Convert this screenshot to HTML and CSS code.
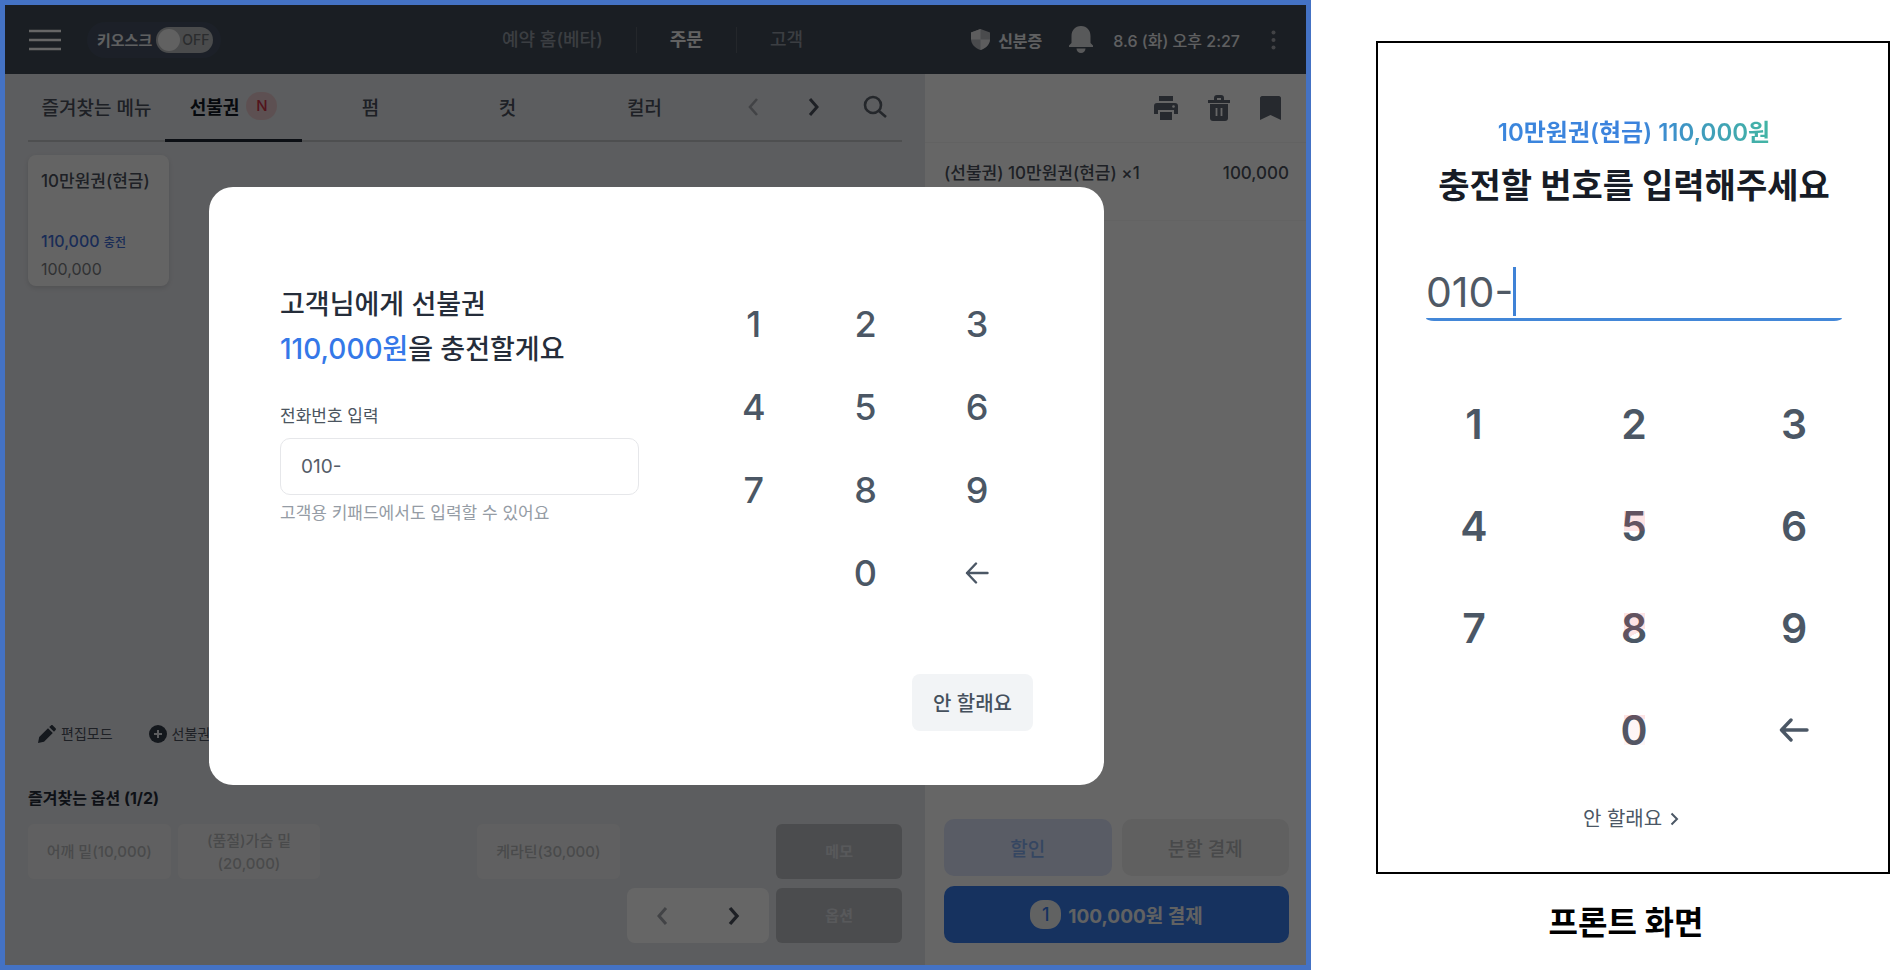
FILE: index.html
```html
<!DOCTYPE html>
<html lang="ko">
<head>
    <meta charset="UTF-8">
    <meta name="viewport" content="width=device-width, initial-scale=1.0">
    <title>선불권 충전</title>
    <link rel="stylesheet" href="styles.css">
</head>
<body>
    <div class="container">
        <!-- POS screen -->
        <div class="pos">
            <header class="header">
                <div class="header-left">
                    <button class="icon-button" aria-label="메뉴">
                        <svg width="32" height="22" viewBox="0 0 32 22" stroke="#fff" stroke-width="2.6"><path d="M0 2h32M0 11h32M0 20h32"/></svg>
                    </button>
                    <label class="kiosk">키오스크
                        <span class="switch"><input type="checkbox">OFF</span>
                    </label>
                </div>
                <nav class="nav">
                    <a href="#">예약 홈(베타)</a>
                    <a href="#" class="active">주문</a>
                    <a href="#">고객</a>
                </nav>
                <div class="header-right">
                    <a href="#" class="id-check">
                        <svg width="19" height="21" viewBox="0 0 19 21"><path d="M9.500 0 19 3.500V10c0 5-4 9-9.500 11C4 19 0 15 0 10V3.500z" fill="#b9bcc1"/><path d="M9.500 0v10.500H0V3.500zM19 10.500c-.4 5-4 8.700-9.500 10.500V10.500z" fill="#e8e9eb"/></svg>
                        신분증
                    </a>
                    <svg class="bell" width="24" height="27" viewBox="0 0 24 27" fill="#dcdee1"><path d="M12 0c-6 0-9.500 4.500-9.500 10v7L0 19.500V21h24v-1.500L21.500 17v-7C21.500 4.500 18 0 12 0zM7.500 22.500h9c0 2.500-2 4.500-4.500 4.500s-4.500-2-4.500-4.500z"/></svg>
                    <time>8.6 (화) 오후 2:27</time>
                    <button class="icon-button more" aria-label="더보기">
                        <svg width="5" height="20" viewBox="0 0 5 20" fill="#a5a9ae"><circle cx="2.500" cy="2.500" r="2"/><circle cx="2.500" cy="10" r="2"/><circle cx="2.500" cy="17.500" r="2"/></svg>
                    </button>
                </div>
            </header>

            <div class="pos-body">
                <!-- Menu side -->
                <main class="menu">
                    <div class="tabs">
                        <button class="tab">즐겨찾는 메뉴</button>
                        <button class="tab active">선불권 <span class="new">N</span></button>
                        <button class="tab">펌</button>
                        <button class="tab">컷</button>
                        <button class="tab">컬러</button>
                        <div class="tab-tools">
                            <button class="icon-button" aria-label="이전">
                                <svg width="12" height="20" viewBox="0 0 12 20" fill="none" stroke="#a5a9ae" stroke-width="2.600"><path d="M10 2 3 10l7 8"/></svg>
                            </button>
                            <button class="icon-button" aria-label="다음">
                                <svg width="12" height="20" viewBox="0 0 12 20" fill="none" stroke="#4b525e" stroke-width="3"><path d="m2 2 7 8-7 8"/></svg>
                            </button>
                            <button class="icon-button" aria-label="검색">
                                <svg width="24" height="24" viewBox="0 0 24 24" fill="none" stroke="#5b616b" stroke-width="2.600"><circle cx="10" cy="10" r="8"/><path d="m16 16 7 6"/></svg>
                            </button>
                        </div>
                    </div>

                    <button class="ticket">
                        <span class="ticket-name">10만원권(현금)</span>
                        <span class="ticket-charge">110,000 <small>충전</small></span>
                        <span class="ticket-price">100,000</span>
                    </button>

                    <div class="edit-tools">
                        <button class="edit-tool">
                            <svg width="18" height="18" viewBox="0 0 18 18" fill="#343c49"><path d="M0 18l1.200-6L10 3.200l4.800 4.800L6 16.800zM11.200 2 13 .4c.6-.5 1.300-.5 1.800 0l2.800 2.800c.5.500.5 1.200 0 1.800L16 6.800z"/></svg>
                            편집모드
                        </button>
                        <button class="edit-tool">
                            <svg width="18" height="18" viewBox="0 0 18 18"><circle cx="9" cy="9" r="9" fill="#343c49"/><path d="M9 5v8M5 9h8" stroke="#e6e8ed" stroke-width="2"/></svg>
                            선불권 추가
                        </button>
                    </div>

                    <h2 class="option-title">즐겨찾는 옵션 (1/2)</h2>
                    <div class="options">
                        <button class="option">어깨 밑(10,000)</button>
                        <button class="option">(품절)가슴 밑<br>(20,000)</button>
                        <button class="option blank" disabled></button>
                        <button class="option">케라틴(30,000)</button>
                        <button class="option dark memo">메모</button>
                        <div class="pager">
                            <button class="icon-button" aria-label="이전 옵션">
                                <svg width="12" height="20" viewBox="0 0 12 20" fill="none" stroke="#a5a9ae" stroke-width="3"><path d="M10 2 3 10l7 8"/></svg>
                            </button>
                            <button class="icon-button" aria-label="다음 옵션">
                                <svg width="12" height="20" viewBox="0 0 12 20" fill="none" stroke="#4b525e" stroke-width="3.400"><path d="m2 2 7 8-7 8"/></svg>
                            </button>
                        </div>
                        <button class="option dark">옵션</button>
                    </div>
                </main>

                <!-- Order side -->
                <aside class="order">
                    <div class="order-tools">
                        <button class="icon-button" aria-label="인쇄">
                            <svg width="24" height="24" viewBox="0 0 24 24" fill="#5f6774"><path d="M5 0h14v5H5z"/><path d="M3 7h18c2 0 3 1 3 3v8h-4v-4H4v4H0v-8c0-2 1-3 3-3z"/><path d="M6 16h12v8H6z"/><circle cx="19.500" cy="10.500" r="1.300" fill="#fff"/></svg>
                        </button>
                        <button class="icon-button" aria-label="삭제">
                            <svg width="24" height="26" viewBox="0 0 24 26" fill="#5f6774"><path d="M1 5h6V3c0-2 1-3 3-3h4c2 0 3 1 3 3v2h6v3H1zm9 0h4V3h-4z"/><path d="M3 9h18v14c0 2-1 3-3 3H6c-2 0-3-1-3-3z"/><path d="M9.500 13v8M14.500 13v8" stroke="#fff" stroke-width="1.800"/></svg>
                        </button>
                        <button class="icon-button" aria-label="저장">
                            <svg width="21" height="24" viewBox="0 0 21 24" fill="#5f6774"><path d="M2 0h17c1 0 2 1 2 2v22l-10.500-5L0 24V2c0-1 1-2 2-2z"/></svg>
                        </button>
                    </div>
                    <div class="order-item">
                        <span>(선불권) 10만원권(현금) ×1</span>
                        <span>100,000</span>
                    </div>
                    <div class="order-actions">
                        <button class="action discount">할인</button>
                        <button class="action split">분할 결제</button>
                        <button class="action pay"><span class="count">1</span>100,000원 결제</button>
                    </div>
                </aside>
            </div>

            <!-- Charge dialog -->
            <div class="overlay">
                <div class="modal" role="dialog" aria-modal="true">
                    <div class="modal-body">
                        <form class="modal-form">
                            <h1 class="modal-title">고객님에게 선불권<br><em>110,000원</em>을 충전할게요</h1>
                            <label class="modal-label" for="pos-phone">전화번호 입력</label>
                            <input class="modal-input" type="text" id="pos-phone" value="010-">
                            <p class="modal-hint">고객용 키패드에서도 입력할 수 있어요</p>
                        </form>
                        <div class="keypad">
                            <button>1</button>
                            <button>2</button>
                            <button>3</button>
                            <button>4</button>
                            <button>5</button>
                            <button>6</button>
                            <button>7</button>
                            <button>8</button>
                            <button>9</button>
                            <button class="zero">0</button>
                            <button aria-label="지우기">
                                <svg width="24" height="22" viewBox="0 0 24 22" fill="none" stroke="#4b5765" stroke-width="2.400" stroke-linecap="round" stroke-linejoin="round"><path d="M22.500 11H2M11 1.500 2 11l9 9.500"/></svg>
                            </button>
                        </div>
                    </div>
                    <button class="cancel">안 할래요</button>
                </div>
            </div>
        </div>

        <!-- Customer screen -->
        <figure class="front">
            <div class="phone">
                <p class="phone-product"><span>10만원권(현금) 110,000원</span></p>
                <h2 class="phone-title"><label for="front-phone">충전할 번호를 입력해주세요</label></h2>
                <div class="phone-field">
                    <input type="text" id="front-phone" value="010-">
                    <span class="caret"></span>
                </div>
                <div class="keypad large">
                    <button>1</button>
                    <button>2</button>
                    <button>3</button>
                    <button>4</button>
                    <button><span class="tint tint-five">5</span></button>
                    <button>6</button>
                    <button>7</button>
                    <button><span class="tint tint-eight">8</span></button>
                    <button>9</button>
                    <button class="zero"><span class="tint tint-zero">0</span></button>
                    <button aria-label="지우기">
                        <svg width="30" height="24" viewBox="0 0 30 24" fill="none" stroke="#4b5765" stroke-width="3.400" stroke-linecap="round" stroke-linejoin="round"><path d="M28 12H3M12 2 2.500 12l9.500 10"/></svg>
                    </button>
                </div>
                <a href="#" class="phone-skip">안 할래요
                    <svg width="9" height="14" viewBox="0 0 9 14" fill="none" stroke="#4b5765" stroke-width="2"><path d="m1.500 1.500 5.500 5.500-5.500 5.500"/></svg>
                </a>
            </div>
            <figcaption class="caption">프론트 화면</figcaption>
        </figure>
    </div>
</body>
</html>
```
FILE: styles.css
```css
* {
    box-sizing: border-box;
}
body {
    margin: 0;
    font-family: Inter, "Noto Sans CJK KR", sans-serif;
    font-size: 18px;
    color: #4b525e;
    background-color: #fff;
}
button,
input {
    font: inherit;
    color: inherit;
}
button {
    padding: 0;
    border: none;
    background: none;
    cursor: pointer;
}
a {
    color: inherit;
    text-decoration: none;
}
svg {
    display: block;
    flex-shrink: 0;
}
h1, h2, p, figure {
    margin: 0;
}
.container {
    display: grid;
    grid-template-columns: 1311fr 514fr;
    gap: 65px;
    min-height: 100vh;
}

/* POS screen */
.pos {
    position: relative;
    display: flex;
    flex-direction: column;
    border: 5px solid #4472c4;
}
.header {
    display: grid;
    grid-template-columns: 1fr auto 1fr;
    align-items: center;
    height: 69px;
    padding: 0 30px 0 24px;
    background-color: #434b57;
    color: #edeff2;
}
.header-left,
.header-right {
    display: flex;
    align-items: center;
}
.header-right {
    justify-content: flex-end;
    font-size: 16px;
    font-weight: 500;
}
.kiosk {
    display: flex;
    align-items: center;
    gap: 4px;
    height: 36px;
    margin-left: 26px;
    padding: 0 8px 0 10px;
    border-radius: 18px;
    background-color: #465264;
    font-size: 15px;
    font-weight: 700;
}
.switch {
    display: flex;
    align-items: center;
    gap: 2px;
    width: 57px;
    height: 26px;
    padding: 2px;
    border-radius: 13px;
    background-color: #b9bbbd;
    color: #6b6f74;
    font-size: 14px;
    font-weight: 500;
}
.switch input {
    appearance: none;
    width: 22px;
    height: 22px;
    margin: 0;
    border-radius: 50%;
    background-color: #f2f2f2;
}
.nav {
    display: flex;
    font-size: 18px;
    line-height: 26px;
    font-weight: 500;
    color: #949ca6;
}
.nav a {
    padding: 0 33px;
}
.nav a + a {
    border-left: 1px solid #5a616c;
}
.nav .active {
    color: #f4f5f6;
    font-weight: 700;
}
.id-check {
    display: flex;
    align-items: center;
    gap: 8px;
    font-weight: 700;
}
.bell {
    margin: 0 20px 0 27px;
}
.more {
    margin-left: 31px;
}
.pos-body {
    display: grid;
    grid-template-columns: 920fr 381fr;
    flex: 1;
}
.menu {
    display: flex;
    flex-direction: column;
    padding: 0 23px 22px;
    background-color: #e6e8ed;
}
.tabs {
    display: grid;
    grid-template-columns: repeat(5, 137fr) 189fr;
    height: 68px;
    border-bottom: 2px solid #c4c5c9;
}
.tab {
    display: flex;
    align-items: center;
    justify-content: center;
    gap: 7px;
    height: 68px;
    padding-bottom: 4px;
    font-size: 19px;
    font-weight: 500;
    white-space: nowrap;
}
.tab.active {
    border-bottom: 3px solid #1f2634;
    padding-bottom: 1px;
    color: #111723;
    font-size: 18px;
    font-weight: 700;
}
.new {
    width: 31px;
    border-radius: 14px;
    background-color: #e9c9cc;
    color: #cf3348;
    font-size: 15px;
    font-weight: 500;
    line-height: 28px;
}
.tab-tools {
    display: flex;
    align-items: center;
    justify-content: space-between;
    padding: 0 15px 2px 28px;
}
.tab-tools .icon-button {
    display: flex;
    justify-content: center;
    width: 24px;
}
.ticket {
    display: flex;
    flex-direction: column;
    width: 141px;
    height: 131px;
    margin: 13px 0 auto;
    padding: 13px 13px 4px;
    border-radius: 8px;
    background-color: #fafafa;
    box-shadow: 0 2px 5px rgba(0, 0, 0, 0.12);
    text-align: left;
    line-height: 26px;
    white-space: nowrap;
}
.ticket-name {
    flex: 1;
    font-size: 17px;
    font-weight: 500;
}
.ticket-charge {
    color: #3f6fd8;
    font-size: 16px;
    font-weight: 500;
}
.ticket-charge small {
    font-size: 12px;
}
.ticket-price {
    color: #7b7e83;
    font-size: 16px;
}
.edit-tools {
    display: flex;
    gap: 36px;
    padding-left: 10px;
}
.edit-tool {
    display: flex;
    align-items: center;
    gap: 5px;
    font-size: 14px;
    line-height: 24px;
}
.option-title {
    margin: 40px 0 14px;
    color: #252c39;
    font-size: 16px;
    font-weight: 700;
    line-height: 24px;
}
.options {
    display: grid;
    grid-template-columns: repeat(5, 143fr) 126fr;
    grid-auto-rows: 55px;
    gap: 9px 7px;
}
.option {
    border-radius: 6px;
    background-color: #f1f1f2;
    color: #b7b9bc;
    font-size: 15px;
    line-height: 23px;
    font-weight: 500;
}
.option.blank {
    background: none;
}
.option.dark {
    background-color: #bbbec3;
    color: #dddfe3;
    font-size: 15px;
    font-weight: 700;
}
.memo {
    grid-column: 6;
}
.pager {
    display: flex;
    grid-column: 5;
    align-items: center;
    justify-content: space-around;
    border-radius: 8px;
    background-color: #fff;
}
.order {
    display: flex;
    flex-direction: column;
    background-color: #fff;
}
.order-tools {
    display: flex;
    align-items: center;
    justify-content: flex-end;
    gap: 29px;
    height: 69px;
    padding-right: 25px;
    border-bottom: 1px solid #f5f5f5;
}
.order-item {
    display: flex;
    justify-content: space-between;
    height: 78px;
    padding: 18px 17px 0 19px;
    border-bottom: 1px solid #f7f7f7;
    font-size: 17px;
    font-weight: 500;
    line-height: 24px;
}
.order-actions {
    display: grid;
    grid-template-columns: 1fr 1fr;
    gap: 10px;
    margin-top: auto;
    padding: 0 17px 22px 19px;
}
.action {
    height: 57px;
    border-radius: 10px;
    font-size: 19px;
    font-weight: 500;
}
.discount {
    background-color: #dfe6fc;
    color: #86b0f3;
}
.split {
    background-color: #f0f0f0;
    color: #b4b6b9;
}
.pay {
    display: flex;
    grid-column: 1 / -1;
    align-items: center;
    justify-content: center;
    gap: 7px;
    background-color: #377dee;
    color: #f3f4f6;
    font-weight: 700;
}
.count {
    width: 31px;
    border-radius: 13px;
    background-color: #f3f4f6;
    color: #377dee;
    font-size: 18px;
    font-weight: 500;
    line-height: 29px;
}

/* Charge dialog */
.overlay {
    position: absolute;
    inset: 0;
    display: flex;
    align-items: center;
    justify-content: center;
    padding: 2px 0 0 2px;
    background-color: rgba(0, 0, 0, 0.6);
}
.modal {
    display: flex;
    flex-direction: column;
    width: 895px;
    padding: 95px 71px 54px;
    border-radius: 24px;
    background-color: #fff;
}
.modal-body {
    display: flex;
    justify-content: space-between;
    margin-bottom: 60px;
}
.modal-form {
    display: flex;
    flex-direction: column;
    width: 359px;
}
.modal-title {
    margin-bottom: 32px;
    color: #252d3a;
    font-size: 27px;
    font-weight: 500;
    line-height: 45px;
}
.modal-title em {
    color: #3578e8;
    font-size: 28px;
    font-style: normal;
}
.modal-label,
.modal-hint {
    font-size: 17px;
    line-height: 24px;
}
.modal-label {
    color: #4b5560;
}
.modal-input {
    height: 57px;
    margin: 10px 0 6px;
    padding: 0 20px;
    border: 1px solid #e6e7ea;
    border-radius: 10px;
    outline: none;
    background-color: #fff;
    color: #555d68;
    font-size: 19px;
}
.modal-hint {
    color: #959ca5;
}
.keypad {
    display: grid;
    grid-template-columns: repeat(3, 1fr);
    grid-auto-rows: 83px;
    width: 335px;
    color: #4b5765;
    font-size: 36px;
    font-weight: 500;
}
.keypad button {
    display: flex;
    align-items: center;
    justify-content: center;
}
.keypad .zero {
    grid-column: 2;
}
.cancel {
    align-self: flex-end;
    width: 121px;
    height: 57px;
    border-radius: 8px;
    background-color: #f2f4f6;
    color: #45505d;
    font-size: 20px;
    font-weight: 500;
}

/* Customer screen */
.phone {
    display: flex;
    flex-direction: column;
    align-items: center;
    margin-top: 41px;
    padding: 72px 46px 36px 48px;
    border: 2px solid #000;
}
.phone-product {
    font-size: 24px;
    font-weight: 600;
    line-height: 36px;
}
.phone-product span {
    background: linear-gradient(90deg, #3b86dc 0%, #3b82de 50%, #3f9cbc 75%, #43b5a4 100%);
    background-clip: text;
    color: transparent;
}
.phone-title {
    margin: 10px 0 54px;
    color: #171c26;
    font-size: 34px;
    font-weight: 700;
    line-height: 50px;
}
.phone-field {
    position: relative;
    width: 100%;
}
.phone-field input {
    display: block;
    width: 100%;
    height: 56px;
    padding: 0;
    border: none;
    border-bottom: 3px solid #4387d8;
    border-radius: 0 0 8px 8px / 0 0 3px 3px;
    outline: none;
    background: none;
    color: #4f5965;
    font-size: 41px;
}
.caret {
    position: absolute;
    top: 2px;
    left: 87px;
    width: 3px;
    height: 49px;
    background-color: #3f82d6;
}
.keypad.large {
    grid-auto-rows: 102px;
    align-self: stretch;
    width: auto;
    margin: 52px -32px 21px -32px;
    font-size: 41px;
    font-weight: 600;
}
.tint {
    position: relative;
}
.tint::after {
    content: "";
    position: absolute;
    top: 50%;
    left: 50%;
    width: 21px;
    height: 30px;
    margin: -15px 0 0 -10px;
}
.tint-five::after {
    background: linear-gradient(rgba(240, 60, 70, 0.14) 66%, transparent 66%);
}
.tint-eight::after {
    background: linear-gradient(150deg, rgba(240, 60, 70, 0.14) 65%, transparent 65%);
}
.tint-zero::after {
    background: linear-gradient(rgba(240, 60, 70, 0.14) 12%, rgba(240, 60, 70, 0.05) 12%);
}
.phone-skip {
    display: flex;
    align-items: center;
    gap: 8px;
    padding-right: 6px;
    color: #4b5765;
    font-size: 20px;
    line-height: 34px;
}
.caption {
    padding: 26px 14px 0 0;
    color: #000;
    font-size: 32px;
    font-weight: 700;
    line-height: 46px;
    text-align: center;
}
```
